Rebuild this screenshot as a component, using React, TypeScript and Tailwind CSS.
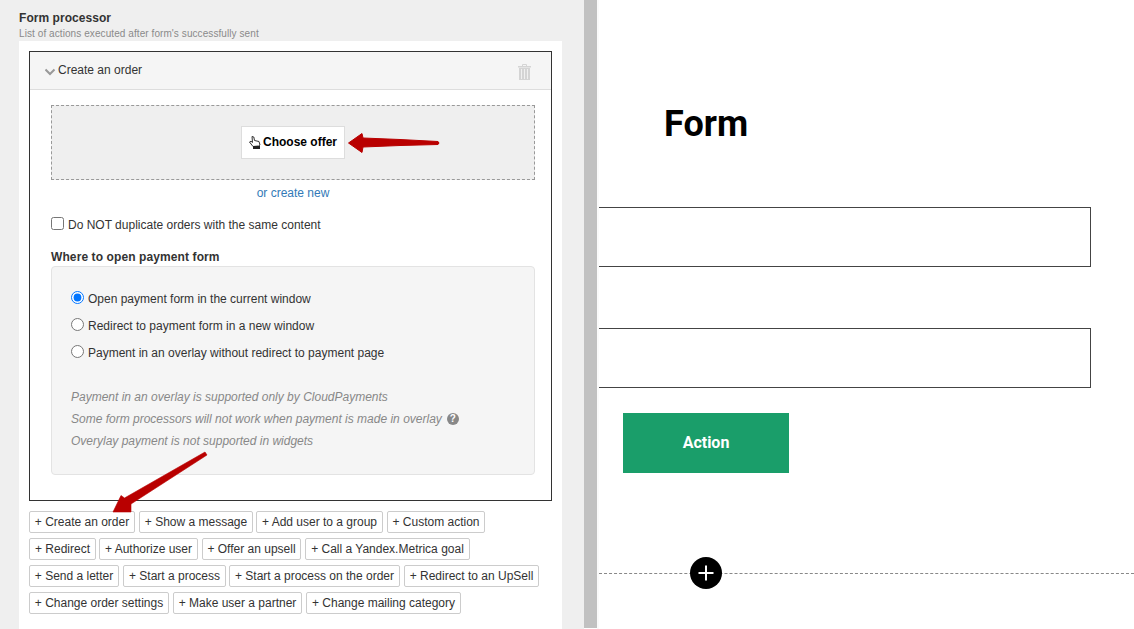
const actions = [
  [["Create an order", "w-[106px]"], ["Show a message", "ml-[4px] w-[114px]"], ["Add user to a group", "ml-[3px] w-[127px]"], ["Custom action", "ml-[4px] w-[98px]"]],
  [["Redirect", "w-[67px]"], ["Authorize user", "ml-[3px] w-[99px]"], ["Offer an upsell", "ml-[4px] w-[99px]"], ["Call a Yandex.Metrica goal", "ml-[4px] w-[165px]"]],
  [["Send a letter", "w-[90px]"], ["Start a process", "ml-[4px] w-[103px]"], ["Start a process on the order", "ml-[3px] w-[171px]"], ["Redirect to an UpSell", "ml-[4px] w-[135px]"]],
  [["Change order settings", "w-[140px]"], ["Make user a partner", "ml-[4px] w-[129px]"], ["Change mailing category", "ml-[4px] w-[155px]"]],
];

function Radio({ checked, label }: { checked?: boolean; label: string }) {
  return (
    <label className="flex h-[27px] items-start">
      <input type="radio" name="pay" defaultChecked={checked} className="mt-[1px] mr-[4px] h-[13px] w-[13px] accent-[#0075ff]" />
      <span className="mt-[1px] leading-[17px]">{label}</span>
    </label>
  );
}

export default function App() {
  return (
    <div className="flex h-[629px] w-[1134px] overflow-hidden bg-white font-['Liberation_Sans',Arial,sans-serif] text-[12px] text-[#333]">
      <div className="relative h-[629px] w-[584px] shrink-0 bg-[#efefef] pl-[19px]">
        <div className="pt-[10px] text-[12px] font-bold leading-[16px] tracking-[0.05px] text-[#333]">Form processor</div>
        <div className="mt-[1px] text-[10px] leading-[14px] tracking-[0.08px] text-[#8a8a8a]">List of actions executed after form's successfully sent</div>
        <div className="w-[543px] h-[588px] bg-white px-[10px] pt-[10px]">
          <div className="h-[450px] w-[523px] border border-[#333]">
            <div className="flex h-[38px] items-center justify-between border-b border-[#ddd] bg-[#f5f5f5] pl-[15px] pr-[20px]">
              <div className="flex items-center">
                <svg width="11" height="8" viewBox="0 0 11 8" className="mt-[2px] mr-[2px]">
                  <path d="M0.5 1.5 L5 6 L9.5 1.5" fill="none" stroke="#999" strokeWidth="2" />
                </svg>
                <span className="leading-[16px] pb-[2px]">Create an order</span>
              </div>
              <svg width="13" height="16" viewBox="0 0 13 16" className="mt-[2px]">
                <path d="M4.5 2 V0.5 H8.5 V2" fill="none" stroke="#d4d4d4" />
                <rect x="0" y="2" width="13" height="1.5" fill="#d4d4d4" />
                <rect x="1" y="4" width="11" height="12" fill="#d4d4d4" />
                <path d="M3.5 5 V15 M6.5 5 V15 M9.5 5 V15" stroke="#f0f0f0" />
              </svg>
            </div>
            <div className="px-[21px] pt-[15px]">
              <div className="flex h-[75px] w-[484px] items-center justify-center border border-dashed border-[#999] bg-[#efefef]">
                <button className="flex h-[33px] w-[104px] items-center justify-center gap-[2px] border border-[#ddd] bg-white pb-[2px] text-[12px] font-bold text-black">
                  <svg width="12" height="13" viewBox="0 0 12 13" className="mt-[1px] shrink-0">
                    <path d="M3 0.5 L4.8 1 L5.5 4.5 L10 5.5 L11 9 L9.5 10 L4 10.5 L0.5 6 L2 5.2 L3.5 6.5 Z" fill="#fff" stroke="#333" strokeWidth="1" strokeLinejoin="round" />
                    <rect x="4" y="10" width="7" height="3" fill="#222" />
                  </svg>
                  Choose offer
                </button>
              </div>
              <div className="mt-[5px] pl-[5px] text-center leading-[16px] text-[#337ab7]">or create new</div>
              <label className="mt-[15px] flex h-[16px] items-center">
                <input type="checkbox" className="mr-[4px] mb-[2px] h-[13px] w-[13px]" />
                <span className="mt-[1px] leading-[16px]">Do NOT duplicate orders with the same content</span>
              </label>
              <div className="mt-[17px] font-bold leading-[16px] tracking-[0.1px]">Where to open payment form</div>
              <div className="mt-[1px] h-[209px] w-[484px] rounded-[4px] border border-[#e3e3e3] bg-[#f5f5f5] pl-[19px] pt-[23px]">
                <Radio checked label="Open payment form in the current window" />
                <Radio label="Redirect to payment form in a new window" />
                <Radio label="Payment in an overlay without redirect to payment page" />
                <div className="mt-[15px] italic leading-[22px] text-[#888]">
                  <div>Payment in an overlay is supported only by CloudPayments</div>
                  <div className="flex items-center">
                    Some form processors will not work when payment is made in overlay
                    <span className="ml-[5px] flex h-[12px] w-[12px] items-center justify-center rounded-full bg-[#888] text-[10px] font-bold not-italic leading-none text-white">?</span>
                  </div>
                  <div>Overylay payment is not supported in widgets</div>
                </div>
              </div>
            </div>
          </div>
          <div className="mt-[10px] flex flex-col gap-[5px]">
            {actions.map((row, i) => (
              <div key={i} className="flex">
                {row.map(([label, size]) => (
                  <button key={label} className={`h-[22px] ${size} rounded-[2px] border border-[#ccc] bg-white text-center text-[12px] leading-[20px] text-[#333]`}>
                    + {label}
                  </button>
                ))}
              </div>
            ))}
          </div>
        </div>
        <svg className="absolute left-[340px] top-[130px]" width="105" height="26" viewBox="0 0 105 26">
          <path d="M8.5 13 L22 3.5 L23 8 L60 9.5 L98 11.5 Q100 13 98 14.5 L60 15.5 L23 17 L22 22.5 Z" fill="#b90000" stroke="#b90000" strokeLinejoin="round" />
        </svg>
        <svg className="absolute left-[105px] top-[445px]" width="110" height="90" viewBox="0 0 110 90">
          <path d="M8 67 L16 50.5 L19.5 53 L100 7 L102 10 L26 59 L26 67 Z" fill="#b90000" stroke="#b90000" strokeWidth="0.6" strokeLinejoin="round" />
        </svg>
      </div>
      <div className="h-[628px] w-[13px] shrink-0 bg-[#c1c1c1]" />
      <div className="h-[629px] w-[2px] shrink-0 bg-[#fafafa]" />
      <div className="relative w-[535px] shrink-0 overflow-hidden">
        <h1 className="ml-[65px] mt-[102px] font-['Roboto',sans-serif] text-[36px] font-bold leading-[44px] text-black">Form</h1>
        <div className="-ml-px mt-[61px] h-[60px] w-[493px] border border-[#444] bg-white" />
        <div className="-ml-px mt-[61px] h-[60px] w-[493px] border border-[#444] bg-white" />
        <div className="ml-[24px] mt-[25px] flex h-[60px] w-[166px] items-center justify-center bg-[#1a9e6a] font-['Roboto',sans-serif] text-[16px] font-bold text-white">Action</div>
        <div className="relative mt-[100px] border-t border-dashed border-[#888]">
          <div className="absolute left-[91px] top-[-17px] flex h-[32px] w-[32px] items-center justify-center rounded-full bg-black">
            <svg width="18" height="18" viewBox="0 0 18 18">
              <path d="M9 1.5 V16.5 M1.5 9 H16.5" stroke="#fff" strokeWidth="2" />
            </svg>
          </div>
        </div>
      </div>
    </div>
  );
}
